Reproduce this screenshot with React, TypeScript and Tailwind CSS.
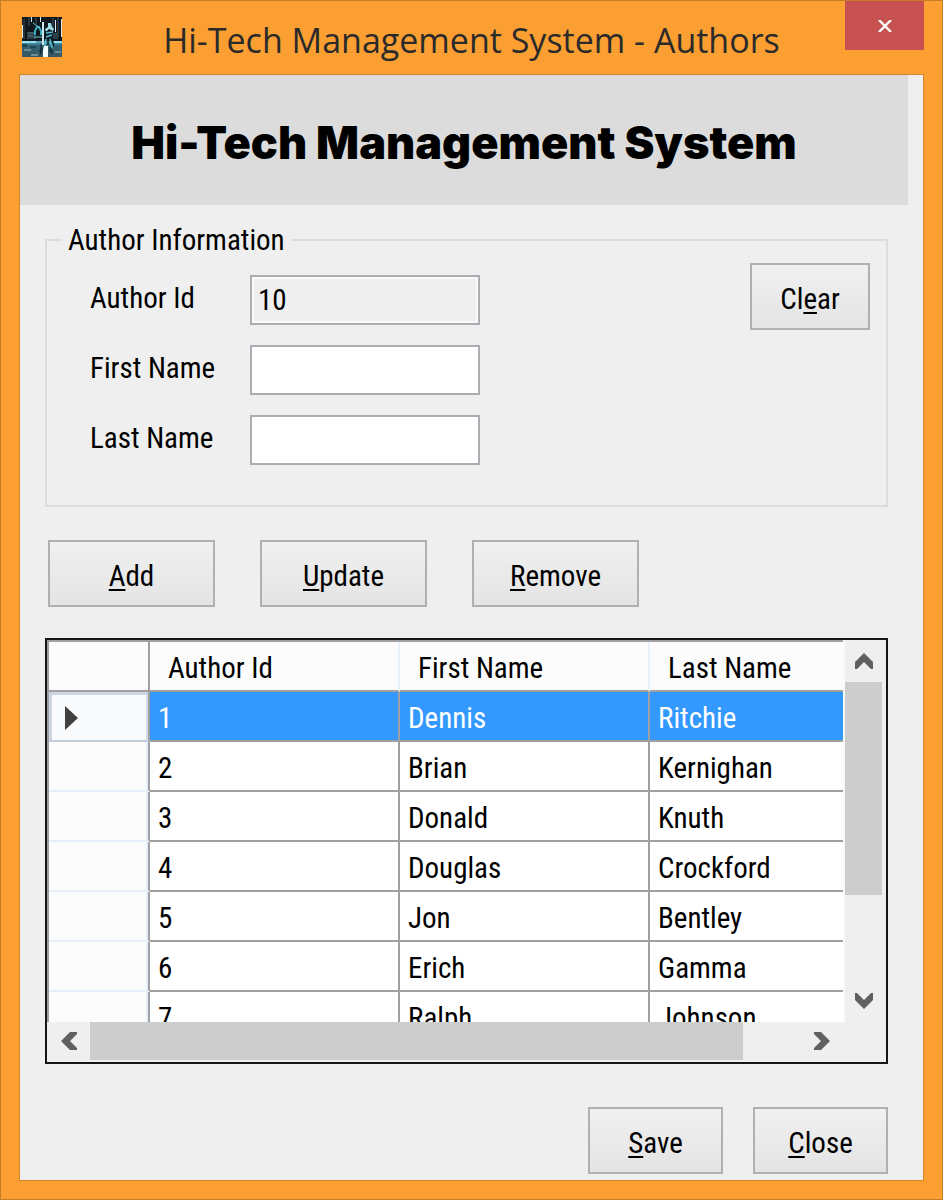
import { useState } from "react";
import type { ReactNode } from "react";

const authors = [
  { id: 1, first: "Dennis", last: "Ritchie" },
  { id: 2, first: "Brian", last: "Kernighan" },
  { id: 3, first: "Donald", last: "Knuth" },
  { id: 4, first: "Douglas", last: "Crockford" },
  { id: 5, first: "Jon", last: "Bentley" },
  { id: 6, first: "Erich", last: "Gamma" },
  { id: 7, first: "Ralph", last: "Johnson" },
];

function AppIcon() {
  return (
    <svg className="size-10 shrink-0" viewBox="0 0 40 40" aria-hidden="true">
      <defs>
        <linearGradient id="floor" x1="0" y1="0" x2="0" y2="1">
          <stop offset="0" stopColor="#5fb4c8" />
          <stop offset="0.3" stopColor="#2f6375" />
          <stop offset="1" stopColor="#3a5761" />
        </linearGradient>
      </defs>
      <rect width="40" height="40" fill="#10181d" />
      <rect y="24" width="40" height="16" fill="url(#floor)" />
      <path d="M1 2H3V22H1ZM6 0H8V9H6ZM13 1H15V7H13ZM30 1H32V12H30ZM35 0H37V20H35Z" fill="#29363d" />
      <path d="M5 15H14V22H5ZM31 16H36V22H31Z" fill="#2b4149" />
      <path d="M6 16H12M6 19H11" stroke="#5d7780" />
      <path d="M9 0H10V5H9ZM18 0H19V5H18ZM33 3H34V15H33ZM39 2H40V20H39ZM0 8H1V21H0Z" fill="#d4e9ee" />
      <path d="M0 24H14V26H0ZM32 24H40V26H32Z" fill="#8fe0ee" />
      <path d="M20 5H22V28H20Z" fill="#c9e8ee" />
      <path d="M22 29H26V40H21V33Z" fill="#f4feff" />
      <path d="M13 18V14L15 10H17L19 14V18" fill="none" stroke="#39a9bd" strokeWidth="2" />
      <path d="M15 13H17V17H15Z" fill="#0b1216" />
      <path d="M11 6L18 11M12 20H20" stroke="#68cddd" />
      <path d="M26 6H29L30 10L32 12L31 14L27 12L24 15L23 12L26 10Z" fill="#9edce6" />
      <path d="M24 14L31 16L30 22L25 21Z" fill="#10272f" />
      <path d="M24 16L31 15M24 20L30 18M24 22L23 29M28 22L30 31" stroke="#55b9cb" strokeWidth="1.5" />
      <path d="M26 23L26 28M30 24L32 29" stroke="#0d2028" strokeWidth="1.5" />
      <path d="M19 27L20 33L18 38M28 30L30 37M17 34H20M27 34H31" stroke="#173039" strokeWidth="1.5" />
      <path d="M2 32H9V34H2ZM9 37H16V39H9ZM33 34H39V36H33Z" fill="#6f8d96" />
      <path d="M0 27H5V30H0ZM8 29H14V31H8Z" fill="#1f4656" />
    </svg>
  );
}

function PushButton({ className, children }: { className: string; children: ReactNode }) {
  return (
    <button
      type="button"
      className={`h-[67px] border-2 border-[#b0b0b0] bg-linear-to-b from-[#f0f0f0] to-[#e4e4e4] pt-1 text-center ${className}`}
    >
      {children}
    </button>
  );
}

function Key({ children }: { children: string }) {
  return <span className="underline decoration-2 underline-offset-3">{children}</span>;
}

function Chevron({ turn }: { turn: string }) {
  return (
    <svg className={`h-4 w-5 ${turn}`} viewBox="0 0 20 16" aria-hidden="true">
      <path d="M1 9L10 0L19 9V16H17L10 9L3 16H1Z" fill="#606060" />
    </svg>
  );
}

function Field({
  id,
  label,
  value,
  onChange,
}: {
  id: string;
  label: string;
  value: string;
  onChange?: (v: string) => void;
}) {
  return (
    <div className="flex items-center">
      <label htmlFor={id} className="w-40 shrink-0 pb-1">
        {label}
      </label>
      <input
        id={id}
        value={value}
        readOnly={!onChange}
        onChange={(e) => onChange?.(e.target.value)}
        className="h-[50px] w-[230px] border-2 border-[#abadb3] bg-white px-1.5 outline-none read-only:bg-[#efefef] read-only:shadow-[inset_0_0_0_2px_#fafafa]"
      />
    </div>
  );
}

export default function App() {
  const [first, setFirst] = useState("");
  const [last, setLast] = useState("");
  const [selected, setSelected] = useState(1);

  return (
    <div className="flex min-h-screen flex-col border border-[#c77d28] bg-[#fc9f32] px-[18px] pb-[18px] text-black">
      <header className="flex h-[73px] items-start">
        <div className="w-[79px] pt-4 pl-[3px]">
          <AppIcon />
        </div>
        <h1 className="flex-1 pt-4 text-center font-['Open_Sans',sans-serif] text-[34px] leading-[46px] whitespace-nowrap text-[#2a2a2a]">
          Hi-Tech Management System - Authors
        </h1>
        <button
          type="button"
          aria-label="Close window"
          className="flex h-[49px] w-[79px] items-center justify-center bg-[#c75050]"
        >
          <svg className="h-3 w-[14px]" viewBox="0 0 14 12" aria-hidden="true">
            <path d="M1 0L13 12M13 0L1 12" stroke="#fff" strokeWidth="2.4" />
          </svg>
        </button>
      </header>

      <main className="flex-1 border border-[#d4852a] bg-[#efefef] font-['Roboto_Condensed','Liberation_Sans',sans-serif] text-[29px] leading-8">
        <div className="mr-[15px] flex h-[130px] items-center justify-center bg-[#dcdcdc]">
          <h2 className="pt-1 font-['Inter',sans-serif] text-[45px] leading-none font-black whitespace-nowrap">
            Hi-Tech Management System
          </h2>
        </div>

        <div className="pr-[35px] pb-[5px] pl-[25px]">
          <fieldset className="mt-[19px] border-2 border-[#dcdcdc] pr-4 pb-10 pl-[43px]">
            <legend className="-ml-7 px-1.5">Author Information</legend>
            <div className="flex items-start justify-between">
              <div className="flex flex-col gap-5 pt-[19px]">
                <Field id="author-id" label="Author Id" value="10" />
                <Field id="first-name" label="First Name" value={first} onChange={setFirst} />
                <Field id="last-name" label="Last Name" value={last} onChange={setLast} />
              </div>
              <div className="pt-[7px]">
                <PushButton className="w-[120px]">
                  Cl<Key>e</Key>ar
                </PushButton>
              </div>
            </div>
          </fieldset>

          <div className="mt-[33px] flex gap-[45px] pl-[3px]">
            <PushButton className="w-[167px]">
              <Key>A</Key>dd
            </PushButton>
            <PushButton className="w-[167px]">
              <Key>U</Key>pdate
            </PushButton>
            <PushButton className="w-[167px]">
              <Key>R</Key>emove
            </PushButton>
          </div>

          <div className="mt-[31px] border-2 border-[#161616] pr-0.5 pb-0.5">
            <div className="flex h-[382px]">
              <div className="min-w-0 flex-1 overflow-hidden border-t-2 border-l-2 border-[#a0a0a0] bg-white">
                <table className="w-full table-fixed border-separate border-spacing-0 text-left">
                  <thead>
                    <tr className="h-[50px] bg-[#fcfcfc]">
                      <th className="w-[101px] border-r-2 border-b-2 border-[#a0a0a0]" />
                      <th className="w-[250px] border-r-2 border-b-2 border-r-[#e8f1fa] border-b-[#a0a0a0] pt-1 pl-[18px] font-normal">
                        Author Id
                      </th>
                      <th className="w-[250px] border-r-2 border-b-2 border-r-[#e8f1fa] border-b-[#a0a0a0] pt-1 pl-[18px] font-normal">
                        First Name
                      </th>
                      <th className="border-b-2 border-[#a0a0a0] pt-1 pl-[18px] font-normal">Last Name</th>
                    </tr>
                  </thead>
                  <tbody>
                    {authors.map((a) => {
                      const on = a.id === selected;
                      return (
                        <tr
                          key={a.id}
                          onClick={() => setSelected(a.id)}
                          className={on ? "h-[50px] bg-[#3399ff] text-white" : "h-[50px] bg-white"}
                        >
                          <th
                            className={
                              on
                                ? "border-r-2 border-b-2 border-r-[#a0a0a0] border-b-[#c3cfdd] bg-[#f9fafc] pt-1 pl-4 shadow-[inset_3px_3px_0_#ccd7e3,inset_-2px_0_0_#d3dde8]"
                                : "border-r-2 border-b-2 border-r-[#a0a0a0] border-b-[#e6f0fa] bg-[#fcfcfc] shadow-[inset_-2px_0_0_#e6f0fa]"
                            }
                          >
                            {on && (
                              <svg className="h-6 w-[13px]" viewBox="0 0 13 24" aria-hidden="true">
                                <path d="M0 0L13 12L0 24Z" fill="#404040" />
                              </svg>
                            )}
                          </th>
                          <td className="border-r-2 border-b-2 border-[#a0a0a0] pt-1 pl-2">{a.id}</td>
                          <td className="border-r-2 border-b-2 border-[#a0a0a0] pt-1 pl-2">{a.first}</td>
                          <td className="border-b-2 border-[#a0a0a0] pt-1 pl-2">{a.last}</td>
                        </tr>
                      );
                    })}
                  </tbody>
                </table>
              </div>
              <div className="flex w-[41px] flex-col border-x-2 border-l-[#fafafa] border-r-[#efefef]">
                <button type="button" aria-label="Scroll up" className="flex h-[42px] items-center justify-center">
                  <Chevron turn="rotate-0" />
                </button>
                <div className="h-[213px] bg-[#cdcdcd]" />
                <div className="flex-1" />
                <button type="button" aria-label="Scroll down" className="flex h-[42px] items-center justify-center">
                  <Chevron turn="rotate-180" />
                </button>
              </div>
            </div>
            <div className="mr-[41px] flex h-[38px]">
              <button type="button" aria-label="Scroll left" className="flex w-[43px] items-center justify-center">
                <Chevron turn="-rotate-90" />
              </button>
              <div className="flex flex-1">
                <div className="w-[653px] bg-[#cdcdcd]" />
              </div>
              <button type="button" aria-label="Scroll right" className="flex w-[43px] items-center justify-center">
                <Chevron turn="rotate-90" />
              </button>
            </div>
          </div>

          <div className="mt-[43px] flex justify-end gap-[30px]">
            <PushButton className="w-[135px]">
              <Key>S</Key>ave
            </PushButton>
            <PushButton className="w-[135px]">
              <Key>C</Key>lose
            </PushButton>
          </div>
        </div>
      </main>
    </div>
  );
}
